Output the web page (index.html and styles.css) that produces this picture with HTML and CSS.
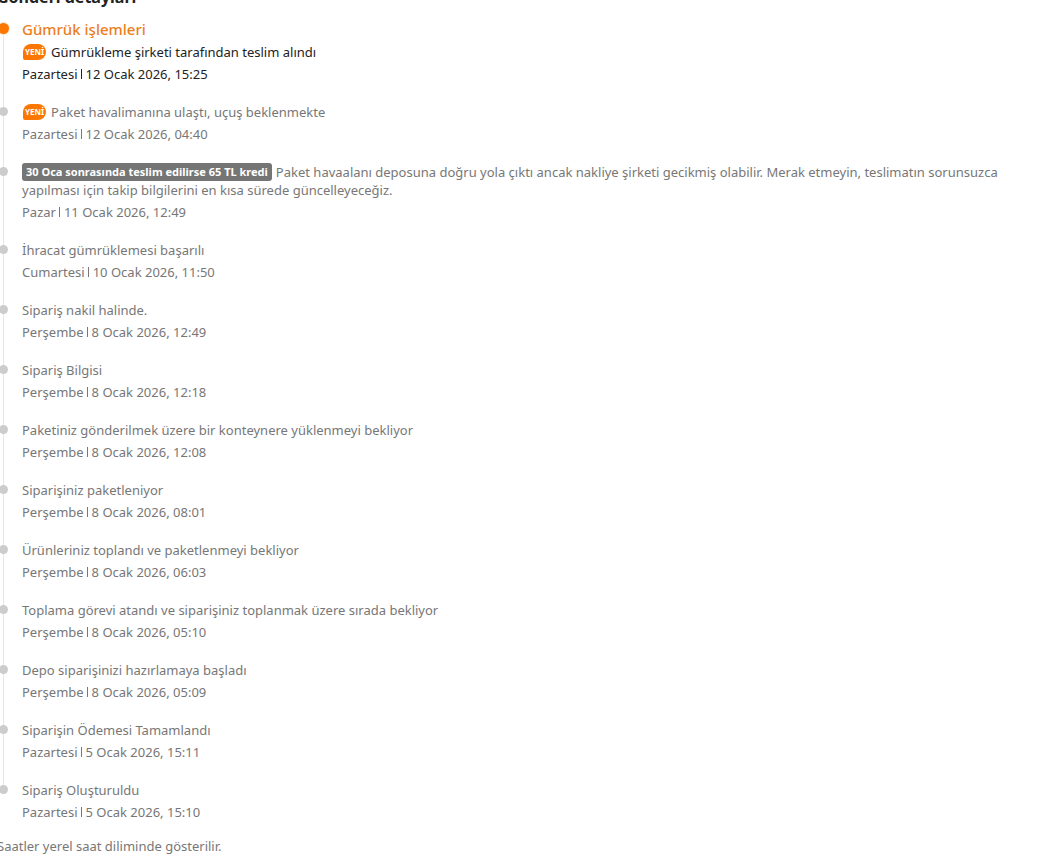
FILE: index.html
```html
<!DOCTYPE html>
<html lang="tr">
<head>
<meta charset="utf-8">
<title>Gönderi detayları</title>
<link rel="stylesheet" href="styles.css">
</head>
<body>
<main class="panel">
  <h1 class="panel-title">Gönderi detayları</h1>
  <ol class="timeline">
    <li class="event current">
      <h2 class="stage">Gümrük işlemleri</h2>
      <p class="text"><span class="new">YENİ</span>Gümrükleme şirketi tarafından teslim alındı</p>
      <p class="date"><span>Pazartesi</span><time>12 Ocak 2026, 15:25</time></p>
    </li>
    <li class="event">
      <p class="text"><span class="new">YENİ</span>Paket havalimanına ulaştı, uçuş beklenmekte</p>
      <p class="date"><span>Pazartesi</span><time>12 Ocak 2026, 04:40</time></p>
    </li>
    <li class="event">
      <p class="text"><span class="credit">30 Oca sonrasında teslim edilirse 65 TL kredi</span>Paket havaalanı deposuna doğru yola çıktı ancak nakliye şirketi gecikmiş olabilir. Merak etmeyin, teslimatın sorunsuzca yapılması için takip bilgilerini en kısa sürede güncelleyeceğiz.</p>
      <p class="date"><span>Pazar</span><time>11 Ocak 2026, 12:49</time></p>
    </li>
    <li class="event">
      <p class="text">İhracat gümrüklemesi başarılı</p>
      <p class="date"><span>Cumartesi</span><time>10 Ocak 2026, 11:50</time></p>
    </li>
    <li class="event">
      <p class="text">Sipariş nakil halinde.</p>
      <p class="date"><span>Perşembe</span><time>8 Ocak 2026, 12:49</time></p>
    </li>
    <li class="event">
      <p class="text">Sipariş Bilgisi</p>
      <p class="date"><span>Perşembe</span><time>8 Ocak 2026, 12:18</time></p>
    </li>
    <li class="event">
      <p class="text">Paketiniz gönderilmek üzere bir konteynere yüklenmeyi bekliyor</p>
      <p class="date"><span>Perşembe</span><time>8 Ocak 2026, 12:08</time></p>
    </li>
    <li class="event">
      <p class="text">Siparişiniz paketleniyor</p>
      <p class="date"><span>Perşembe</span><time>8 Ocak 2026, 08:01</time></p>
    </li>
    <li class="event">
      <p class="text">Ürünleriniz toplandı ve paketlenmeyi bekliyor</p>
      <p class="date"><span>Perşembe</span><time>8 Ocak 2026, 06:03</time></p>
    </li>
    <li class="event">
      <p class="text">Toplama görevi atandı ve siparişiniz toplanmak üzere sırada bekliyor</p>
      <p class="date"><span>Perşembe</span><time>8 Ocak 2026, 05:10</time></p>
    </li>
    <li class="event">
      <p class="text">Depo siparişinizi hazırlamaya başladı</p>
      <p class="date"><span>Perşembe</span><time>8 Ocak 2026, 05:09</time></p>
    </li>
    <li class="event">
      <p class="text">Siparişin Ödemesi Tamamlandı</p>
      <p class="date"><span>Pazartesi</span><time>5 Ocak 2026, 15:11</time></p>
    </li>
    <li class="event">
      <p class="text">Sipariş Oluşturuldu</p>
      <p class="date"><span>Pazartesi</span><time>5 Ocak 2026, 15:10</time></p>
    </li>
  </ol>
  <p class="note">Saatler yerel saat diliminde gösterilir.</p>
</main>
</body>
</html>
```

FILE: styles.css
```css
* {
  box-sizing: border-box;
}

body {
  margin: 0;
  overflow: hidden;
  background: #fff;
  color: #777;
  font-family: "Segoe UI", "Noto Sans", sans-serif;
  font-size: 13px;
  line-height: 18px;
}

h1, h2, p, ol {
  margin: 0;
  padding: 0;
}

.panel {
  margin: -15px 0 0 -3px;
}

.panel-title {
  color: #222;
  font-size: 16px;
  font-weight: 700;
  line-height: 24px;
}

.timeline {
  margin-top: 10px;
  list-style: none;
}

.event {
  position: relative;
  display: flex;
  flex-direction: column;
  gap: 4px;
  padding: 0 40px 20px 25px;
}

.event:last-child {
  padding-bottom: 16px;
}

.event::before {
  content: "";
  position: absolute;
  top: 9px;
  bottom: -9px;
  left: 6px;
  width: 1px;
  background: #e6e6e6;
}

.event:last-child::before {
  display: none;
}

.event::after {
  content: "";
  position: absolute;
  top: 4px;
  left: 2px;
  width: 9px;
  height: 9px;
  border-radius: 50%;
  background: #ccc;
}

.current {
  color: #222;
}

.current::after {
  width: 11px;
  height: 11px;
  left: 1px;
  background: #fb7701;
  box-shadow: 0 0 0 1px #ffe4cc;
}

.stage {
  color: #ee7d1b;
  font-size: 15px;
  font-weight: 500;
  line-height: 20px;
}

.new {
  display: inline-block;
  height: 16px;
  margin: 1px 5px 0 1px;
  padding: 0 2px;
  border-radius: 8px 8px 8px 2px;
  background: #fb7701;
  color: #fff;
  font-size: 8px;
  font-weight: 700;
  line-height: 16px;
  vertical-align: top;
}

.credit {
  display: inline-block;
  margin-right: 4px;
  padding: 0 4px;
  border-radius: 3px;
  background: #757575;
  color: #fff;
  font-size: 11px;
  font-weight: 700;
  line-height: 18px;
  vertical-align: top;
}

.date {
  display: flex;
  align-items: center;
}

.date time {
  display: flex;
  align-items: center;
}

.date time::before {
  content: "";
  width: 1px;
  height: 10px;
  margin: 0 4px 0 3px;
  background: currentColor;
}
```
